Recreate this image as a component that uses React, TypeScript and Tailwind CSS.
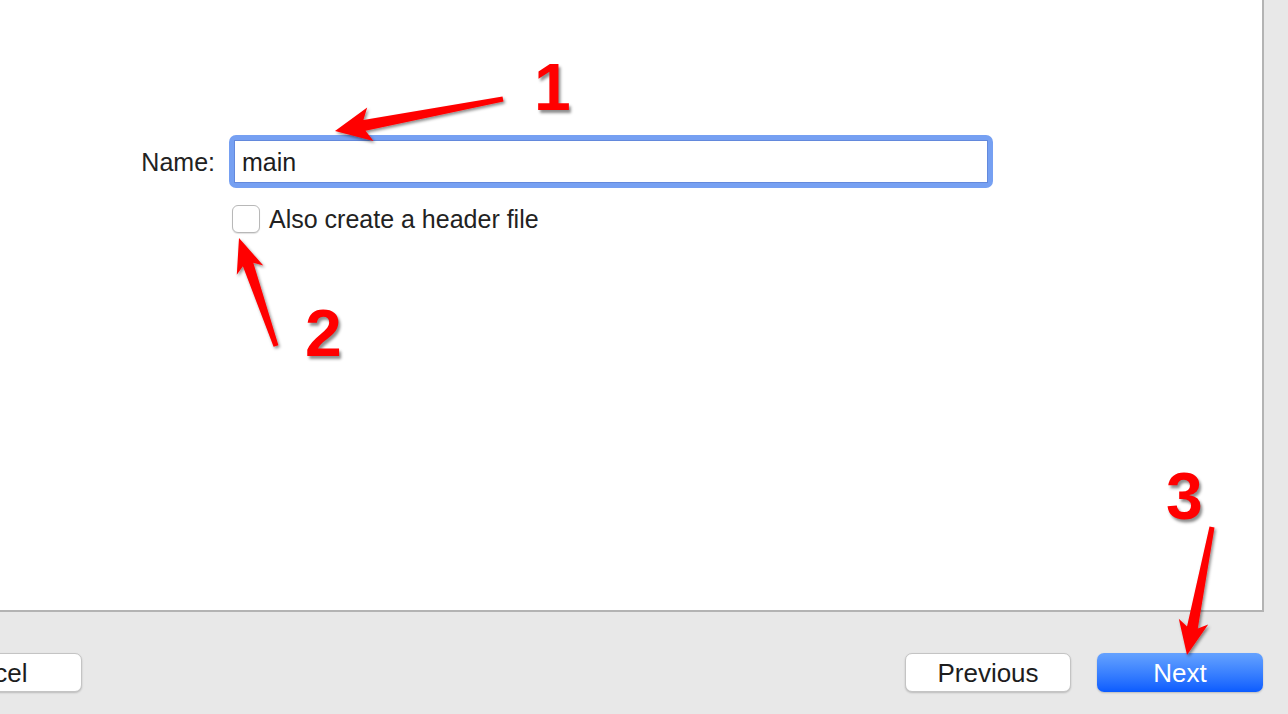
import React from "react";

type Pt = [number, number];

// tapered callout arrow, drawn as one polygon
function arrowPoints(tail: Pt, tip: Pt, wTail: number, wNeck: number, headW: number, headL: number) {
  const dx = tip[0] - tail[0];
  const dy = tip[1] - tail[1];
  const len = Math.hypot(dx, dy);
  const ux = dx / len;
  const uy = dy / len;
  const nx = -uy;
  const ny = ux;
  const neck: Pt = [tip[0] - ux * headL, tip[1] - uy * headL];
  const wing: Pt = [neck[0] - ux * 6, neck[1] - uy * 6];
  const pts: Pt[] = [
    [tail[0] + (nx * wTail) / 2, tail[1] + (ny * wTail) / 2],
    [neck[0] + (nx * wNeck) / 2, neck[1] + (ny * wNeck) / 2],
    [wing[0] + (nx * headW) / 2, wing[1] + (ny * headW) / 2],
    tip,
    [wing[0] - (nx * headW) / 2, wing[1] - (ny * headW) / 2],
    [neck[0] - (nx * wNeck) / 2, neck[1] - (ny * wNeck) / 2],
    [tail[0] - (nx * wTail) / 2, tail[1] - (ny * wTail) / 2],
  ];
  return pts.map((p) => `${p[0].toFixed(1)},${p[1].toFixed(1)}`).join(" ");
}

const arrows = [
  { tail: [503, 99] as Pt, tip: [335, 131] as Pt, head: 34, len: 30 },
  { tail: [276, 346] as Pt, tip: [239, 238] as Pt, head: 28, len: 28 },
  { tail: [1212, 527] as Pt, tip: [1187, 655] as Pt, head: 30, len: 28 },
];

const badgeCls =
  "absolute font-['Liberation_Sans',Arial,sans-serif] font-bold text-[66px] leading-none text-[#ff0000] [paint-order:stroke_fill] [-webkit-text-stroke:7px_white] [text-shadow:2px_3px_3px_rgba(0,0,0,0.45)]";

const btn = "h-[39px] rounded-[7px] shadow-[0_1px_2px_rgba(0,0,0,0.2)] text-[26px] leading-none";

export default function App() {
  return (
    <div className="relative w-[1288px] h-[714px] overflow-hidden bg-[#e8e8e8] font-['Liberation_Sans',Arial,sans-serif] text-[#222]">
      <div className="w-[1264px] h-[612px] bg-white border-r-2 border-b-2 border-[#b3b3b3] pt-[135px]">
        <div className="flex items-center">
          <label className="w-[215px] pt-[3px] text-right text-[25px] pr-[14px] box-content">Name:</label>
          <div className="w-[764px] h-[53px] rounded-[7px] bg-[#76a0f2] p-[5px]">
            <div className="h-full bg-white border border-[#6389dc] flex items-center pt-[3px] px-[7px] text-[25px] text-[#1d1d1d]">
              main
            </div>
          </div>
        </div>
        <div className="flex items-center mt-[11px] ml-[232px] gap-[9px]">
          <div className="w-[28px] h-[28px] rounded-[6px] border border-[#b8b8b8] bg-white shadow-[0_1px_1px_rgba(0,0,0,0.12)]" />
          <span className="text-[25px] pt-[2px]">Also create a header file</span>
        </div>
      </div>

      <div className="flex items-start h-[102px] pt-[41px]">
        <button className={`${btn} ml-[-108px] w-[190px] bg-white border border-[#c4c4c4] text-[#1d1d1d]`}>
          Cancel
        </button>
        <div className="flex-1" />
        <button className={`${btn} w-[166px] bg-white border border-[#c4c4c4] text-[#1d1d1d]`}>
          Previous
        </button>
        <button className={`${btn} ml-[26px] mr-[25px] w-[166px] bg-gradient-to-b from-[#65a2ff] to-[#0a5bff] text-white`}>
          Next
        </button>
      </div>

      <svg className="absolute inset-0 pointer-events-none" width={1288} height={714}>
        <defs>
          <filter id="sh" x="-20%" y="-20%" width="140%" height="140%">
            <feDropShadow dx="1.5" dy="2" stdDeviation="1.5" floodColor="#000" floodOpacity="0.45" />
          </filter>
        </defs>
        {arrows.map((a, i) => (
          <polygon key={i} points={arrowPoints(a.tail, a.tip, 5, 11, a.head, a.len)} fill="#ff0000" filter="url(#sh)" />
        ))}
      </svg>

      <span className={`${badgeCls} left-[534px] top-[54px]`}>1</span>
      <span className={`${badgeCls} left-[305px] top-[300px]`}>2</span>
      <span className={`${badgeCls} left-[1166px] top-[463px]`}>3</span>
    </div>
  );
}
